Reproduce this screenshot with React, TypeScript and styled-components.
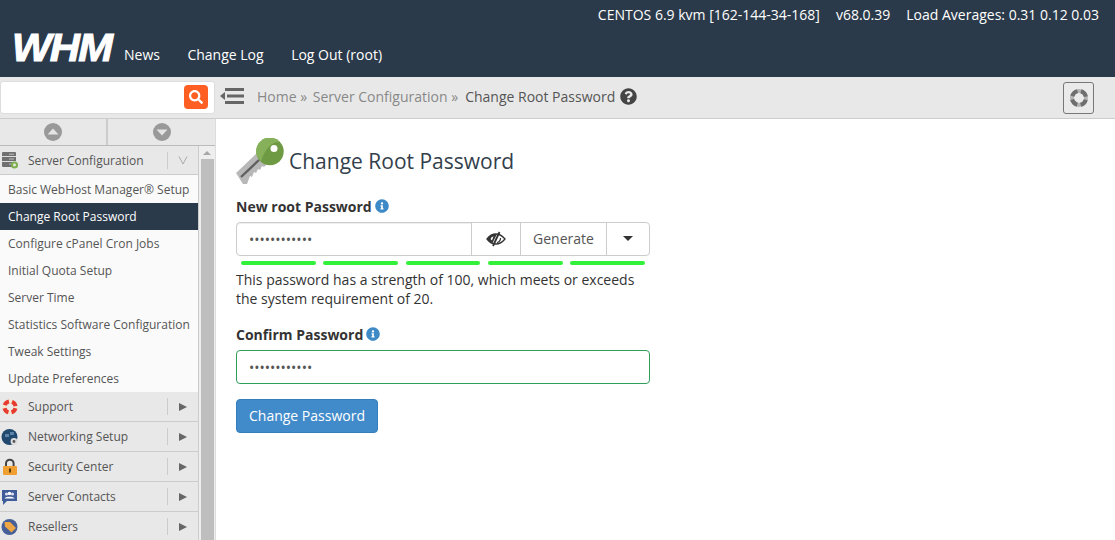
import React from "react";
import styled, { createGlobalStyle } from "styled-components";
import { FaInfoCircle, FaQuestionCircle, FaSearch } from "react-icons/fa";

const Global = createGlobalStyle`
  html, body { margin: 0; padding: 0; height: 540px; overflow: hidden; background: #fff; }
  body { font-family: "Open Sans", "Liberation Sans", sans-serif; font-size: 14px; color: #333; }
  * { box-sizing: border-box; }
`;

const Page = styled.div`
  width: 1115px; height: 540px; display: flex; flex-direction: column; overflow: hidden;
`;
const Header = styled.header`
  height: 77px; flex: none; background: #2b3a4a; color: #fff; display: flex; flex-direction: column;
`;
const Status = styled.div`
  height: 31px; display: flex; justify-content: flex-end; align-items: center; gap: 16px; padding: 0 16px 3px 0; font-size: 14px;
`;
const NavRow = styled.nav`
  display: flex; align-items: flex-start; height: 46px; padding-left: 12px;
`;
const Logo = styled.span`
  width: 112px; font: italic 700 39px/1 "Liberation Sans", sans-serif; letter-spacing: -1.5px; color: #fff;
  margin-top: -3px; -webkit-text-stroke: 1px #fff; flex: none; height: 40px; transform: scaleX(1.07); transform-origin: left center;
`;
const NavLink = styled.a`
  color: #fff; font-size: 14px; line-height: 20px; margin-top: 14px; margin-right: 27.5px;
`;
const SubBar = styled.div`
  height: 42px; flex: none; display: flex; align-items: center; background: #e8e8e8; border-bottom: 1px solid #ccc;
`;
const SearchWrap = styled.div`
  width: 215px; height: 33px; flex: none; margin-top: -1px; background: #fff; border: 1px solid #ddd; border-radius: 3px; display: flex; justify-content: flex-end; align-items: center; padding-right: 6px;
`;
const SearchButton = styled.button`
  width: 24px; height: 24px; border: 0; border-radius: 4px; padding: 0; background: #ff5f22; color: #fff; display: flex; align-items: center; justify-content: center;
`;
const MenuToggle = styled.svg`
  width: 24px; height: 18px; margin-left: 5px; margin-top: -3px; flex: none;
`;
const Crumbs = styled.div`
  margin-left: 13px; margin-top: -2px; display: flex; align-items: center; color: #888; font-size: 14px; flex: 1; gap: 2px; white-space: pre;
`;
const Current = styled.span`
  color: #555; margin-left: 5px;
`;
const HelpIcon = styled(FaQuestionCircle)`
  color: #444; font-size: 17px; margin-left: 3px;
`;
const LifeButton = styled.button`
  width: 31px; height: 32px; margin-right: 21px; border: 1px solid #777; border-radius: 3px; background: #eaeaea; display: flex; align-items: center; justify-content: center; padding: 0;
`;
const Body = styled.div`
  flex: 1; display: flex; min-height: 0;
`;
const Sidebar = styled.aside`
  width: 216px; flex: none; display: flex; flex-direction: column; background: #e8e8e8; border-right: 1px solid #ddd;
`;
const Arrows = styled.div`
  height: 27px; display: flex; flex: none; border-bottom: 1px solid #bbb;
`;
const ArrowCell = styled.div`
  flex: 1; display: flex; align-items: center; justify-content: center;
  &:first-child { flex: none; width: 106px; }
  & + & { border-left: 2px solid #ccc; }
`;
const ArrowDisc = styled.svg`
  width: 18px; height: 18px;
`;
const SideBody = styled.div`
  flex: 1; display: flex; min-height: 0;
`;
const Menu = styled.div`
  width: 199px; flex: none; border-right: 1px solid #ccc;
`;
const Section = styled.div<{ $h: number }>`
  height: ${(p) => p.$h}px; display: flex; align-items: center; background: #e8e8e8; border-bottom: 1px solid #ccc; color: #555; font-size: 12px;
`;
const SectionIcon = styled.svg`
  width: 18px; height: 18px; margin-left: 1px; flex: none;
`;
const SectionLabel = styled.span`
  margin-left: 9px; flex: 1;
`;
const SectionEnd = styled.span`
  width: 31px; height: 17px; border-left: 1px solid #ccc; display: flex; align-items: center; justify-content: center; color: #666; flex: none;
`;
const Item = styled.div<{ $active?: boolean }>`
  height: 27px; padding-left: 8px; display: flex; align-items: center; font-size: 12px; white-space: nowrap;
  background: ${(p) => (p.$active ? "#2b3a4a" : "#fafafa")};
  color: ${(p) => (p.$active ? "#fff" : "#555")};
`;
const ItemsBox = styled.div`
  padding-top: 1px; background: #fafafa;
`;
const Scroll = styled.div`
  flex: 1; background: #eee; display: flex; flex-direction: column; align-items: center;
`;
const ScrollUp = styled.div`
  width: 0; height: 0; margin: 5px 0 4px; border-left: 4px solid transparent; border-right: 4px solid transparent; border-bottom: 4px solid #a8a8a8;
`;
const ScrollThumb = styled.div`
  width: 13px; flex: 1; background: #bebebe;
`;
const Main = styled.main`
  flex: 1; padding: 19px 0 0 20px;
`;
const TitleRow = styled.div`
  display: flex; align-items: center; height: 47px;
`;
const KeyIcon = styled.svg`
  width: 50px; height: 47px; flex: none;
`;
const Title = styled.h1`
  margin: 0 0 0 4px; font-size: 21px; font-weight: 400; color: #333f4c; line-height: 30px; position: relative; top: -1px; left: -1px;
`;
const Label = styled.label<{ $top: number }>`
  display: flex; align-items: center; gap: 3px; margin-top: ${(p) => p.$top}px; height: 20px; font-size: 14px; font-weight: 700; color: #333;
`;
const Info = styled(FaInfoCircle)`
  color: #3d8ac7; font-size: 14px;
`;
const Group = styled.div`
  margin-top: 6px; width: 414px; height: 34px; display: flex; border: 1px solid #ccc; border-radius: 4px; background: #fff;
`;
const GroupInput = styled.div`
  flex: 1; display: flex; align-items: center; padding-left: 12px; font-size: 14px; color: #555; border-radius: 4px 0 0 4px; box-shadow: inset 0 1px 1px rgba(0,0,0,.075);
`;
const GroupCell = styled.div<{ $w: number }>`
  width: ${(p) => p.$w}px; flex: none; border-left: 1px solid #ccc; display: flex; align-items: center; justify-content: center; color: #555; font-size: 14px; padding-bottom: 1px;
`;
const Caret = styled.span`
  width: 0; height: 0; border-left: 5px solid transparent; border-right: 5px solid transparent; border-top: 5px solid #333;
`;
const Bars = styled.div`
  width: 414px; margin-top: 5px; padding: 0 5px; display: flex; gap: 7.5px;
`;
const Bar = styled.div`
  flex: 1; height: 4px; border-radius: 2px; background: #33f03a;
`;
const Hint = styled.p`
  margin: 5px 0 0; width: 414px; line-height: 19px; font-size: 14px; color: #333; height: 38px;
`;
const ConfirmInput = styled.div`
  margin-top: 6px; width: 414px; height: 34px; border: 1px solid #2e9e5b; border-radius: 4px; display: flex; align-items: center; padding-left: 12px; color: #555; font-size: 14px;
`;
const Submit = styled.button`
  margin-top: 15px; width: 142px; height: 34px; border: 1px solid #357ebd; border-radius: 4px; background: #428bca; color: #fff; font: 400 14px "Open Sans", sans-serif; padding: 0 0 2px; display: block;
`;

const Arrow = ({ up }: { up?: boolean }) => (
  <ArrowDisc viewBox="0 0 18 18">
    <circle cx="9" cy="9" r="9" fill="#999" />
    <path d={up ? "M3.5 11.5 L9 5.5 L14.5 11.5Z" : "M3.5 6.5 L9 12.5 L14.5 6.5Z"} fill="#e4e4e4" />
  </ArrowDisc>
);
const RightTri = () => (
  <svg width="8" height="8" viewBox="0 0 8 8"><path d="M0 0 L8 4 L0 8Z" fill="#666" /></svg>
);
const Chevron = () => (
  <svg width="10" height="9" viewBox="0 0 10 9"><path d="M1 .5 L5 8 L9 .5" fill="none" stroke="#aaa" strokeWidth="1" /></svg>
);
const EyeOff = () => (
  <svg width="20" height="16" viewBox="0 0 20 16">
    <path d="M1 8 C4 4 7.5 3 10 3 C13.5 3 16.5 5 19 8 C16.5 11 13.5 13 10 13 C7.5 13 4 12 1 8Z" fill="none" stroke="#333" strokeWidth="1.3" />
    <path d="M1 8 C3 5 6.5 2.8 11 3 L6.5 12 C4.5 11 2.5 9.8 1 8Z" fill="#333" />
    <path d="M4.5 8 A4 4 0 0 1 7.5 5.2 L6 9.5Z" fill="#fff" />
    <path d="M14.5 7 A4.5 4.5 0 0 1 11 11.5" fill="none" stroke="#333" strokeWidth="1.2" />
    <path d="M13.5 1 L7 15" stroke="#333" strokeWidth="1.8" />
  </svg>
);
const LifeRing = () => (
  <svg width="20" height="20" viewBox="0 0 20 20">
    <circle cx="10" cy="10" r="7" fill="none" stroke="#b5b5b5" strokeWidth="4" />
    <circle cx="10" cy="10" r="7" fill="none" stroke="#6e6e6e" strokeWidth="4" strokeDasharray="7.5 3.5" strokeDashoffset="-1.75" />
  </svg>
);

const items = ["Basic WebHost Manager® Setup", "Change Root Password", "Configure cPanel Cron Jobs", "Initial Quota Setup", "Server Time", "Statistics Software Configuration", "Tweak Settings", "Update Preferences"];

const icons: Record<string, React.ReactNode> = {
  server: (<>
    <rect x="1" y="1" width="14" height="15" rx="1" fill="#707070" />
    <path d="M1 5.5h14M1 10.5h14" stroke="#ddd" strokeWidth="1" />
    <path d="M8 3.2h5M8 8h5M8 13h3" stroke="#bbb" strokeWidth="1" />
    <circle cx="13.5" cy="14" r="3.6" fill="#7fb04f" /><circle cx="13.5" cy="14" r="1.4" fill="#e8e8e8" />
  </>),
  support: (<>
    <circle cx="9" cy="9" r="5.6" fill="none" stroke="#f6e6d0" strokeWidth="4" />
    <circle cx="9" cy="9" r="5.6" fill="none" stroke="#e63b2e" strokeWidth="4" strokeDasharray="5.6 3.2" strokeDashoffset="-1.4" />
  </>),
  net: (<>
    <circle cx="8.5" cy="9" r="8" fill="#21486f" />
    <path d="M4 6h4v3H4zM9 4h4v3H9z" fill="#5d84a8" />
    <circle cx="13" cy="13.5" r="3.4" fill="#ddd" /><circle cx="13" cy="13.5" r="1.4" fill="#555" />
  </>),
  lock: (<>
    <path d="M5 8 V5.5 A3.8 3.8 0 0 1 12.6 5.5 V8" fill="none" stroke="#444" strokeWidth="2" />
    <rect x="2" y="8" width="14" height="9" rx="1" fill="#f0a030" />
    <rect x="8" y="10.5" width="2" height="4" fill="#5a3a10" />
  </>),
  contacts: (<>
    <path d="M1 2h15v11H6l-4 4v-4H1z" fill="#3e5c9a" />
    <circle cx="5.5" cy="6" r="1.6" fill="#dde" /><circle cx="8.5" cy="5.5" r="1.8" fill="#fff" /><circle cx="11.5" cy="6" r="1.6" fill="#dde" />
    <path d="M3.5 10.5 C4 8 13 8 13.5 10.5Z" fill="#fff" />
  </>),
  tag: (<>
    <circle cx="8.5" cy="9" r="8" fill="#465f96" />
    <path d="M3.5 4h5.5l6 6-4.5 4.5-6.5-6z" fill="#eea544" />
  </>),
};

const SectionRow = ({ icon, label, open, h }: { icon: string; label: string; open?: boolean; h: number }) => (
  <Section $h={h}>
    <SectionIcon viewBox="0 0 18 18">{icons[icon]}</SectionIcon>
    <SectionLabel>{label}</SectionLabel>
    <SectionEnd>{open ? <Chevron /> : <RightTri />}</SectionEnd>
  </Section>
);

export default function App() {
  return (
    <Page>
      <Global />
      <Header>
        <Status>
          <span>CENTOS 6.9 kvm [162-144-34-168]</span>
          <span>v68.0.39</span>
          <span>Load Averages: 0.31 0.12 0.03</span>
        </Status>
        <NavRow>
          <Logo>WHM</Logo>
          <NavLink>News</NavLink>
          <NavLink>Change Log</NavLink>
          <NavLink>Log Out (root)</NavLink>
        </NavRow>
      </Header>
      <SubBar>
        <SearchWrap>
          <SearchButton aria-label="Search"><FaSearch size={14} /></SearchButton>
        </SearchWrap>
        <MenuToggle viewBox="0 0 24 18">
          <path d="M0 9 L5 5 V13Z" fill="#666" />
          <rect x="5" y="1" width="19" height="3" fill="#666" />
          <rect x="7" y="7.5" width="17" height="3" fill="#666" />
          <rect x="5" y="14" width="19" height="3" fill="#666" />
        </MenuToggle>
        <Crumbs>
          <span>Home »</span>
          <span> Server Configuration »</span>
          <Current>Change Root Password</Current>
          <HelpIcon />
        </Crumbs>
        <LifeButton aria-label="Help"><LifeRing /></LifeButton>
      </SubBar>
      <Body>
        <Sidebar>
          <Arrows>
            <ArrowCell><Arrow up /></ArrowCell>
            <ArrowCell><Arrow /></ArrowCell>
          </Arrows>
          <SideBody>
            <Menu>
              <SectionRow icon="server" label="Server Configuration" open h={29} />
              <ItemsBox>
                {items.map((t, i) => <Item key={t} $active={i === 1}>{t}</Item>)}
              </ItemsBox>
              <SectionRow icon="support" label="Support" h={30} />
              <SectionRow icon="net" label="Networking Setup" h={30} />
              <SectionRow icon="lock" label="Security Center" h={30} />
              <SectionRow icon="contacts" label="Server Contacts" h={30} />
              <SectionRow icon="tag" label="Resellers" h={30} />
            </Menu>
            <Scroll><ScrollUp /><ScrollThumb /></Scroll>
          </SideBody>
        </Sidebar>
        <Main>
          <TitleRow>
            <KeyIcon viewBox="0 0 50 47">
              <path d="M0 35 L21 15 L32 25 L28 29 L26 28 L24 32 L22 31 L20 35 L18 34 L16 39 L14 38 L11 46 L7 46Z" fill="#b8b8b8" />
              <path d="M5 39 L23 22" stroke="#5f5f5f" strokeWidth="2.4" />
              <circle cx="34" cy="13.5" r="13.7" fill="#6f9a44" />
              <path d="M21 18 A13.7 13.7 0 0 1 44 4 C38 3 30 8 25 23 A13.7 13.7 0 0 1 21 18Z" fill="#86b05a" />
              <circle cx="38" cy="10.5" r="3.5" fill="#fff" />
            </KeyIcon>
            <Title>Change Root Password</Title>
          </TitleRow>
          <Label $top={11}>New root Password <Info /></Label>
          <Group>
            <GroupInput>••••••••••••</GroupInput>
            <GroupCell $w={49}><EyeOff /></GroupCell>
            <GroupCell $w={86}>Generate</GroupCell>
            <GroupCell $w={43}><Caret /></GroupCell>
          </Group>
          <Bars><Bar /><Bar /><Bar /><Bar /><Bar /></Bars>
          <Hint>This password has a strength of 100, which meets or exceeds the system requirement of 20.</Hint>
          <Label $top={16}>Confirm Password <Info /></Label>
          <ConfirmInput>••••••••••••</ConfirmInput>
          <Submit>Change Password</Submit>
        </Main>
      </Body>
    </Page>
  );
}
